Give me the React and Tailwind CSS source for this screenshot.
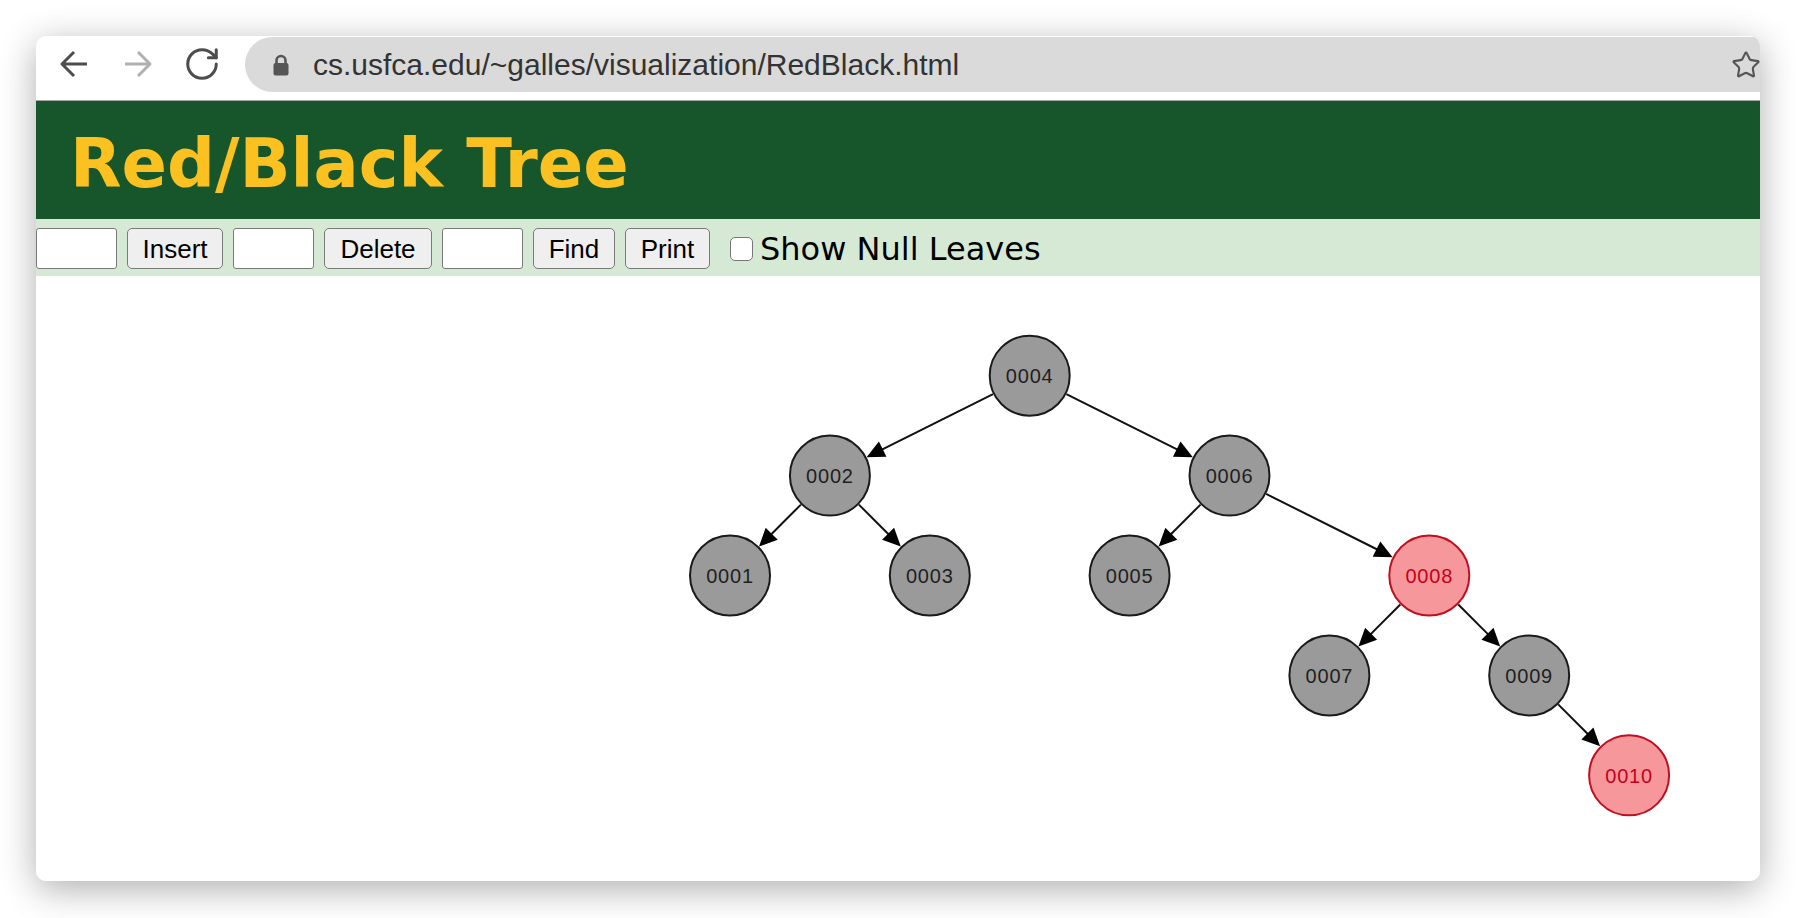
import React from 'react';
import { RotateCw, Star } from 'lucide-react';

// in-order key -> depth in the tree
const nodes = [
  { k: 4, d: 0 },
  { k: 2, d: 1 },
  { k: 6, d: 1 },
  { k: 1, d: 2 },
  { k: 3, d: 2 },
  { k: 5, d: 2 },
  { k: 8, d: 2, red: true },
  { k: 7, d: 3 },
  { k: 9, d: 3 },
  { k: 10, d: 4, red: true },
];

const edges = [
  [4, 2], [4, 6], [2, 1], [2, 3], [6, 5], [6, 8], [8, 7], [8, 9], [9, 10],
];

const R = 41;

function pos(k) {
  const n = nodes.find(x => x.k === k);
  return { x: 694 + (k - 1) * 99.9, y: 99.7 + n.d * 99.9 };
}

function Edge({ from, to }) {
  const a = pos(from);
  const b = pos(to);
  const dx = b.x - a.x;
  const dy = b.y - a.y;
  const len = Math.hypot(dx, dy);
  const ux = dx / len;
  const uy = dy / len;
  const sx = a.x + ux * R;
  const sy = a.y + uy * R;
  const tx = b.x - ux * R;
  const ty = b.y - uy * R;
  const L = 18;
  const W = 8.5;
  const bx = tx - ux * L;
  const by = ty - uy * L;
  const pts = [
    [tx, ty],
    [bx - uy * W, by + ux * W],
    [bx + uy * W, by - ux * W],
  ].map(p => p.join(',')).join(' ');
  return (
    <g>
      <line x1={sx} y1={sy} x2={bx + ux * 2} y2={by + uy * 2} stroke="#111" strokeWidth="2" />
      <polygon points={pts} fill="#000" />
    </g>
  );
}

function Node({ k, red }) {
  const p = pos(k);
  const label = String(k).padStart(4, '0');
  return (
    <g>
      <circle
        cx={p.x}
        cy={p.y}
        r="40"
        fill={red ? '#f6989b' : '#9a9a9a'}
        stroke={red ? '#c0101f' : '#1a1a1a'}
        strokeWidth="2"
      />
      <text
        x={p.x}
        y={p.y + 7.5}
        textAnchor="middle"
        fontFamily="'Liberation Sans', Arial, sans-serif"
        fontSize="20"
        letterSpacing="0.8"
        fill={red ? '#c4001c' : '#1f1f1f'}
      >
        {label}
      </text>
    </g>
  );
}

function TextBox() {
  return (
    <input
      type="text"
      className="w-[81px] h-[41px] bg-white border-[1.5px] border-[#7a7a7a] rounded-[3px] outline-none"
    />
  );
}

function Btn({ w, children }) {
  return (
    <button
      className={`${w} h-[41px] bg-[#efefef] border-[1.5px] border-[#7a7a7a] rounded-[5px] text-[26px] leading-none text-black font-['Liberation_Sans',Arial,sans-serif]`}
    >
      {children}
    </button>
  );
}

export default function App() {
  return (
    <div className="min-h-screen bg-white pt-[36px] pl-[36px]">
      <div className="w-[1724px] h-[845px] rounded-[10px] overflow-hidden bg-white shadow-[0_8px_36px_rgba(0,0,0,0.32)] flex flex-col">
        {/* browser chrome */}
        <div className="h-[56px] flex items-start shrink-0">
          <div className="h-[56px] flex items-center">
            <svg className="ml-[23px]" width="30" height="28" viewBox="0 0 30 28" fill="none">
              <path d="M28 14H3M15 2L3 14L15 26" stroke="#4d4d4d" strokeWidth="3" strokeLinejoin="round" />
            </svg>
            <svg className="ml-[34px]" width="30" height="28" viewBox="0 0 30 28" fill="none">
              <path d="M2 14H27M15 2L27 14L15 26" stroke="#b0b0b0" strokeWidth="3" strokeLinejoin="round" />
            </svg>
            <RotateCw className="ml-[30px]" size={38} strokeWidth={1.9} color="#4d4d4d" />
          </div>
          <div className="ml-[24px] mt-[1px] h-[55px] flex-1 bg-[#dadada] rounded-l-full flex items-center">
            <svg className="ml-[27px]" width="18" height="22" viewBox="0 0 18 22">
              <path d="M4.5 10V6.5a4.5 4.5 0 0 1 9 0V10" stroke="#555" strokeWidth="2.6" fill="none" />
              <rect x="1.5" y="9" width="15" height="12.5" rx="2" fill="#555" />
            </svg>
            <span className="ml-[23px] text-[30px] leading-none text-[#333] font-['Liberation_Sans',Arial,sans-serif]">
              cs.usfca.edu/~galles/visualization/RedBlack.html
            </span>
            <Star className="ml-auto mr-[-1px]" size={30} strokeWidth={1.7} color="#555" />
          </div>
        </div>
        <div className="h-[8px] shrink-0 bg-white" />
        <div className="h-[1px] shrink-0 bg-[#a4a4a4]" />

        {/* page header */}
        <div className="h-[118px] shrink-0 bg-[#17552a] pt-[30px] pl-[34px]">
          <h1 className="text-[67px] leading-none font-bold text-[#fbc120] font-['DejaVu_Sans',Verdana,sans-serif]">
            Red/Black Tree
          </h1>
        </div>

        {/* controls */}
        <div className="h-[57px] shrink-0 bg-[#d6e9d5] pt-[2px] flex items-center gap-[10px]">
          <TextBox />
          <Btn w="w-[96px]">Insert</Btn>
          <TextBox />
          <Btn w="w-[108px]">Delete</Btn>
          <TextBox />
          <Btn w="w-[82px]">Find</Btn>
          <Btn w="w-[85px]">Print</Btn>
          <input
            type="checkbox"
            className="ml-[10px] appearance-none w-[23px] h-[24px] bg-white border-[1.5px] border-[#767676] rounded-[5px]"
          />
          <span className="-ml-[3px] text-[32px] leading-none text-black font-['DejaVu_Sans',Verdana,sans-serif]">
            Show Null Leaves
          </span>
        </div>

        {/* canvas */}
        <div className="flex-1 bg-white">
          <svg width="1724" height="605">
            {edges.map(([a, b]) => (
              <Edge key={`${a}-${b}`} from={a} to={b} />
            ))}
            {nodes.map(n => (
              <Node key={n.k} k={n.k} red={n.red} />
            ))}
          </svg>
        </div>
      </div>
    </div>
  );
}
